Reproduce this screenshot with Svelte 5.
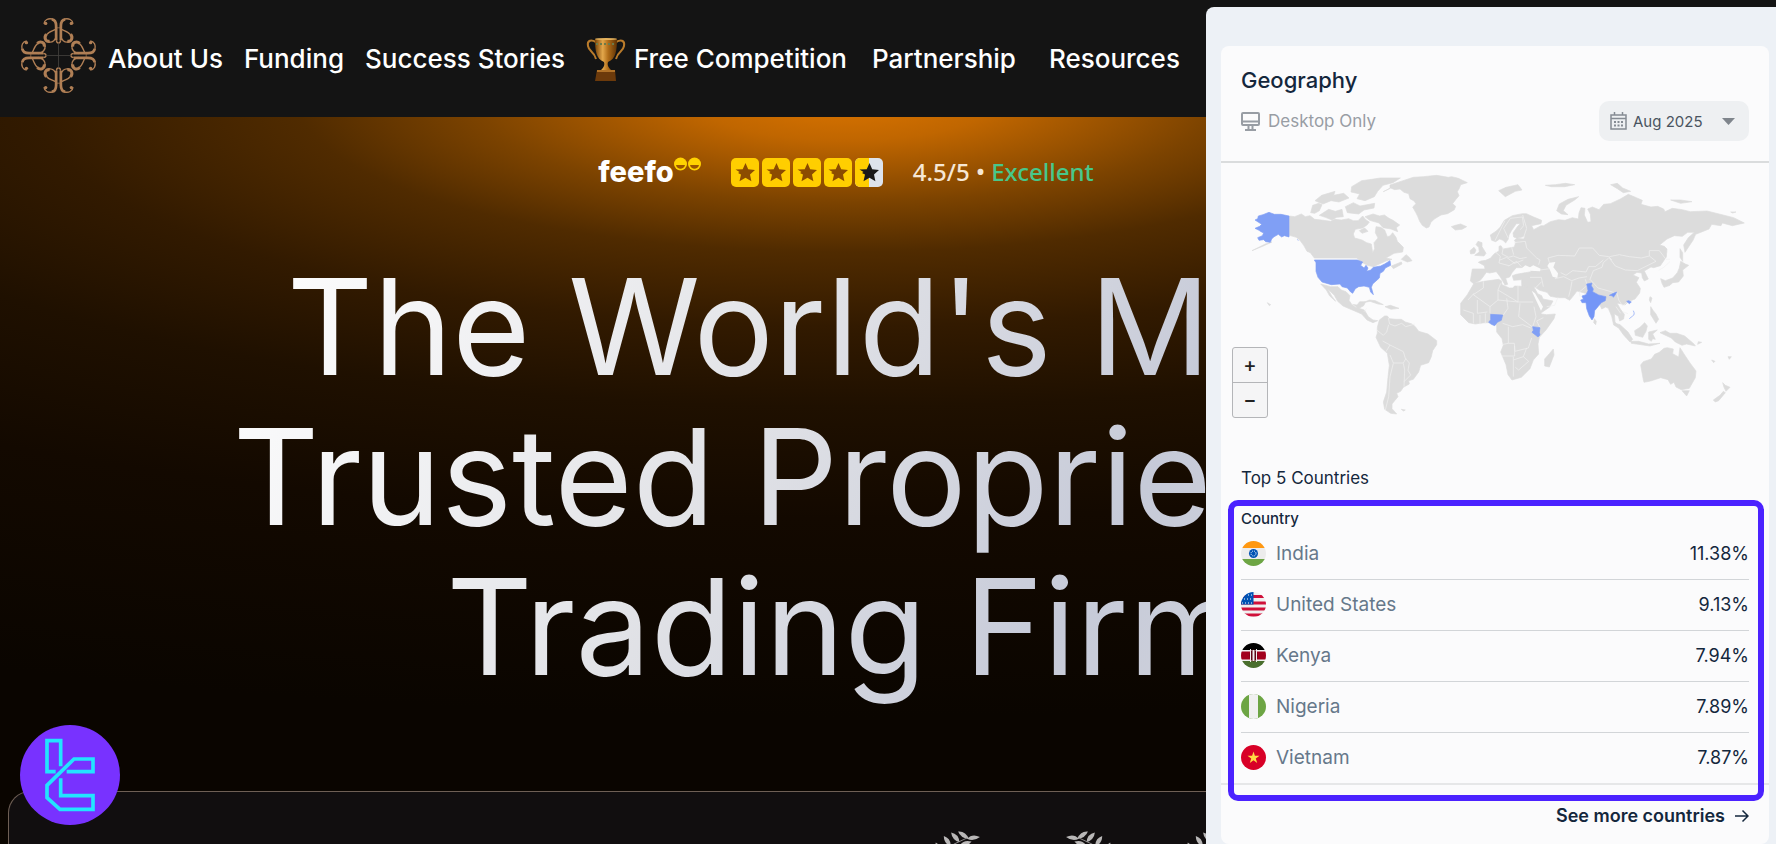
<script>
  let month = $state('Aug 2025');
  let zoom = $state(1);

  const countries = [
    { name: 'India', share: '11.38%' },
    { name: 'United States', share: '9.13%' },
    { name: 'Kenya', share: '7.94%' },
    { name: 'Nigeria', share: '7.89%' },
    { name: 'Vietnam', share: '7.87%' }
  ];

  const stars = [1, 1, 1, 1, 0.5];
  const starPath = 'M14.500 5l2.700 6.300 6.800.7-5 4.500 1.400 6.800-5.900-3.600-6 3.600 1.500-6.800-3-1.500 1.500-1-4-2.400 7.200-.3z';

  // leaves of one laurel branch: x, y, angle
  const leaves = [
    [50, 8, -8], [40, 5, 35], [42, 14, -20], [32, 7, 50], [34, 17, -10],
    [24, 11, 58], [26, 22, -5], [15, 18, 68], [19, 29, 5], [7, 27, 78], [12, 38, 15], [1, 38, 88]
  ];
</script>

<div class="page">
  <header>
    <a class="logo" href="#home" aria-label="Home">
      <svg viewBox="30 23 228 228" fill="none" stroke="#b07f55">
        {#each [0, 90, 180, 270] as angle}
          <g transform="rotate({angle} 144 137)">
            {#each [1, -1] as side}
              <g transform="translate(144 0) scale({side} 1)">
                <path stroke-width="8" d="M-7 92V50C-7 40-10 31-20 30" />
                <path stroke-width="4" d="M-18 29c-12-3-24 2-25 14" />
                <circle cx="-38" cy="42" r="5" fill="#b07f55" stroke="none" />
                <path stroke-width="4" d="M-6 58C-16 64-30 66-36 76" />
                <path stroke-width="9" d="M-36 74c-8 10-2 23 10 21" />
                <path stroke-width="4" d="M-28 97c10 2 20-6 22-20M-6 92c0 6 4 8 6 8" />
              </g>
            {/each}
            <path stroke-width="2" d="M136 55h16" />
            <path stroke-width="2" stroke="#4f4c47" d="M144 100v37" />
          </g>
        {/each}
      </svg>
    </a>
    <nav>
      <a href="#about">About Us</a>
      <a href="#funding">Funding</a>
      <a href="#stories">Success Stories</a>
      <a class="competition" href="#competition">
        <svg viewBox="0 0 40 44" width="40" height="44" aria-hidden="true">
          <defs>
            <linearGradient id="gold">
              <stop offset="0" stop-color="#7a4307" />
              <stop offset=".35" stop-color="#e3a74b" />
              <stop offset=".6" stop-color="#b06c18" />
              <stop offset="1" stop-color="#5f3205" />
            </linearGradient>
          </defs>
          <path d="M10 5C4 2 1 4 2 9c1 6 6 5 8 13M30 5c6-3 9-1 8 4-1 6-6 5-8 13" fill="none" stroke="#b97b2b" stroke-width="2" />
          <path d="M9 2h22c0 11-1 20-9 23-1 3 0 5 3 8H15c3-3 4-5 3-8C10 22 9 13 9 2z" fill="url(#gold)" />
          <path d="M11 33h18l1 11H9z" fill="#6c3a0b" />
          <path d="M11 33h18v2H11z" fill="#b07228" />
          <path d="M10 7h20" stroke="#6d7b4a" stroke-width="2" stroke-dasharray="2 2" />
          <ellipse cx="20" cy="2" rx="11" ry="1" fill="#e4b25d" />
        </svg>
        Free Competition
      </a>
      <a href="#partnership">Partnership</a>
      <a class="resources" href="#resources">Resources</a>
    </nav>
  </header>

  <main>
    <div class="rating">
      <a class="feefo" href="#feefo">
        feefo
        <svg viewBox="0 0 27 14" width="27" height="14" aria-hidden="true">
          <circle cx="6.500" cy="7" r="6.500" fill="#ffd200" />
          <circle cx="20.500" cy="7" r="6.500" fill="#ffd200" />
          <path d="M2 8h9c-1 5-8 5-9 0zM16 8h9c-1 5-8 5-9 0z" fill="#9b5400" />
        </svg>
      </a>
      <div class="stars" role="img" aria-label="4.5 out of 5 stars">
        {#each stars as fill}
          <svg viewBox="0 0 28 29" width="28" height="29">
            <rect width="28" height="29" rx="5" fill={fill < 1 ? '#dde3ec' : '#ffce00'} />
            {#if fill < 1}
              <path d="M14 0H5a5 5 0 0 0-5 5v19a5 5 0 0 0 5 5h9z" fill="#ffce00" />
            {/if}
            <path d={starPath} fill={fill < 1 ? '#191919' : '#8c4c00'} />
          </svg>
        {/each}
      </div>
      <p>4.5/5 • <span>Excellent</span></p>
    </div>

    <h1>The World's Most<br />Trusted Proprietary<br />Trading Firm</h1>

    <section class="awards" aria-label="Awards">
      {#each [0, 1] as wreath}
        <svg viewBox="0 0 184 60" width="184" height="60">
          {#each [0, 1] as side}
            <g transform={side ? 'translate(184 0) scale(-1 1)' : ''} fill="#b9b7b7">
              {#each leaves as [x, y, angle]}
                <path transform="translate({x - 8} {y}) rotate({angle})" d="M-6 0Q0-5 7 0Q0 4-6 0z" />
              {/each}
              <path d="M-6 46Q8 18 36 8" fill="none" stroke="#8b8888" />
            </g>
          {/each}
        </svg>
      {/each}
    </section>
  </main>

  <div class="badge">
    <svg viewBox="60 102 300 300" fill="none" stroke="#22e4ff" stroke-width="11">
      <path d="M167 242H141V149H182V226" />
      <path d="M200 242H279V204H222L141 283V320L180 355H279V314H182V262" />
    </svg>
  </div>

  <aside>
    <div class="card">
      <div class="card-head">
        <h2>Geography</h2>
        <div class="filters">
          <span class="device">
            <svg viewBox="0 0 19 19" width="19" height="19" fill="none" stroke="#989da4" stroke-width="2">
              <rect x="1" y="1" width="17" height="12" rx="1" />
              <path d="M1 9.500h17M7.500 13v4M11.500 13v4M4 18h11" />
            </svg>
            Desktop Only
          </span>
          <label class="month">
            <svg class="calendar" viewBox="0 0 17 18" width="17" height="18" fill="none" stroke="#858b93" stroke-width="1.500">
              <path d="M1 3h15v14H1zM1 6.500h15M4.500 0v3M12.500 0v3" />
              <path d="M4 10h9M4 13.500h9" stroke-width="2" stroke-dasharray="2 1.500" />
            </svg>
            <select bind:value={month} aria-label="Month">
              <option>Aug 2025</option>
              <option>Jul 2025</option>
            </select>
            <svg class="caret" viewBox="0 0 13 7" width="13" height="7"><path d="M0 0h13L6.500 7z" fill="#7f858c" /></svg>
          </label>
        </div>
      </div>

      <div class="map">
        <svg class="world" viewBox="3 9 1644 800" role="img" aria-label="Traffic by country">
          <g fill="#dcdcdc" stroke="#dcdcdc" stroke-width="2" stroke-linejoin="round">
            <!-- Americas -->
            <path d="M490 95l20-10 0-10 30-10 40-13 30-2 40-4 35 6 10-2 20 5 27 13-20 6-4 11-6 10 5 12-10 12-9 12 9 8-4 10-20 12-20 4-20 12-10 10-6 14-8 3-12-8-8-12-6-15-6-12-9-16 10-10-6-8-12-7-4-15-14-4-12-10-16 2-12-5z" />
            <path d="M208 168l16 2 20-8 12 8 14-3 14 11 20 2 28 4 12-6 20 2 22-4 14 6 14 0 14-14 10 12 10 6-6 8-14 10-22 4-6 14 4 12 22 6 14 8 14 4 4 26 6-12-2-18 12-14-8-16 2-18 14 2 12 8 8 20 8-2 8-10 10 14 4 12 18 18-2 14-26 4-24 14 18 4-16 4-22 10-18 8-18-4-14-8-18-14H283l-12-16-10-4-10-18-12-16-10-8-21-6z" />
            <path d="M435 170l24-8 20 6 14-3 14 10 12 6 20 14-10 8 4 12-20-8-24-4-12-14-28-8zM298 166l28-18 20 6 20-6 4 22-20 2-14 8-20-8zM272 158l6-22 18-6 10 4-8 18-14 8zM395 80l30-18 30-4 26-4 60 0-22 14-30 8-16 18-10 16-28 12-24-6 8-14-26-6zM285 122l20-16 40-12-4 12 30-6 16 14-30 12-24-4-24 10zM376 140l24-12 20 10 44-8-2 14-30 6-16 12-34-4zM544 298l14-14 8 6 10 12-14 4zM514 318l30-12 2 6-26 14zM418 212l16-8 10 10-18 6z" />
            <path d="M302 372l30 8 22 0 10 10 14 5 12 12-3 14 8 12 16 2 8-10 18 0-6 12-14 8 16 5 12 20 14 10 14 2-14 6-18-8-16-18-28-12-28-12-16-14-10-18-20-20 12 22 12 16-18-16-10-18zM430 428l18-8 18 2 24 12-16-2-24-8zM495 440l16-4 26 9-24 3zM96 272l40-20 20-6-26 12z" />
            <path d="M478 480l16-12 8 0 6 8 20 2 16 0 12 8 20 6 10 8 10 14 28 8 26 20 0 12-12 18-4 18-8 18-24 8-6 20-16 22-14 4 2 10-18 10-8 12-12 6 4 10-10 12-8 10 0 14 14 16-18-2-18-12-4-22 10-30 4-44 4-36-6-36-20-18-14-30 4-12 0-18z" />
            <path d="M694 200l12-4 16-4 18 8-14 8-20 2zM544 748l12 2-6 3zM142 428l10 6-4 3z" />
            <!-- Europe, Africa, Asia and Oceania -->
            <g transform="translate(660 0)">
              <path d="M97 327l38 0-2-10-18-10 8-4 14-2 14-6 12-14 14-8 0-14 6-2 6 10 22-4 12-2 4-14-4-6 8-6 20 2 4-8-24 6-10-4-2-12 14-20 8-8-12 0-14 20-8 14-2 12-8 12-8-8-10-4-12 8-12-4-4-16 18-12 12-12 12-20 24-14 30-6 12 0 22 10 24 10-2 10-28 6 6 12 22-12 8 0 20-12 24-6 20 2 22-8 18 4 2-18 6-16 12 2-2 20 10 22 10-2-2-22-8-16 14-6 20 8 14-16 20-2 30-14 24-14 24 10 18 8-4 12 30 8 20-2 18 8 4 8 22-10 30 4 24 6 50-2 48 12 32 8 32 16-36 8-30-8-4 8-28-4-8 14-20 8-20 8-8 18-24 36-4-22 14-22 18-16-20 0-16 12-24-2-22 10-22 18 14 4 8 8-2 24-18 26-20 6-8-2-20 12 12 24-12 6-6-10-2-14-14-2-12 8 18 8-8 14 12 18-2 14-14 18-20 8-10 10-14-4-10-2 10 18 12 16-2 14-12 6-4-14-12-8 2 24 10 18-14-8-6-26-10-24-8-4-12 6-10-24-34-22-30-8-12 16-10 12-14-8-20 0-24-4-10-12-22-6-18-12 12 22 12 6 4 10 30 6-10 18-26 18-20 6-12-20-12-24-12-30-2-20 0-12-24 2-4-14 12-4 44-8-4-12-40 0-12 14-8 14-12 4 6 18-8 2-14-24-12-16-20 4-10-2-10 14-8 10-20 10-10-8z" />
              <path d="M102 370l30-6 44-6 8 4 2 12 22 10 10 0 6-6 40 2 8 4 10 24 8 26 14 28 16 2 26-2-4 14-24 34-20 22-4 20 2 30-16 18-10 26-26 26-28 8-12-16-6-30-10-24-6-14 8-20-4-20-16-20 0-20-20-8-16 0-28 4-20-4-24-24 0-34 20-26z" />
              <path d="M314 597l14-16 12-14 2 18-14 36-14-3zM104 286l14-10-2-14-8-8 6-10 12 4 0 12 12 20-6 8zM90 272l12-10 6 8-4 10-12 2zM176 92l22-10 36-8 12 16-20 4-30 16zM316 76l30-2 30-4 28 4-30 6-40 0zM350 152l8-20 26-14 32-8-12 10-26 16-8 16 14 12-20-2zM512 74l20-4 16 14 24 10-22 4-18-12zM692 120l30 0 34 5-34 5zM872 156l16 0-10 3zM720 266l8 12 0 26-8-12zM722 304l14 8 10 4-18 14 2 18-14 18-18 2-8 8-18 6-6-12-4-14 14 6 22-8 14-16 6-14zM630 410l6 4-4 14-4-8zM632 440l8 12 8 10 8 16-8 12-6-10-10-16zM463 476l6 8-2 10-6-6z" />
              <path d="M526 490l14 4 24 22 14 22-8 8-20-22zM572 544l24 0 30 8 34-2-30 8-56-8zM584 512l16-10 14-14 8 10-4 16-10 18-22-6zM626 516l26-6-14 12 8 16-8-2-4 8-8-6zM660 518l16-6 14 8 20 0 24 8 28 24 4 6-26-6-14 4-20-10-12-12zM775 545l10 2-12 6zM815 600l10 4-4 4zM864 590l10 0-6 8z" />
              <path d="M602 615l8-10 24-8 10-14 14-6 14-12 10-2 18 4-2 14 18 10 4-28 14 22 16 24 18 24-2 20-18 32-24 4-16-8-6-14-10 6-8-14-22-6-30 10-20 4-2-8zM726 692l22 0-8 16zM848 668l8 8 14 6-12 12-6-12zM850 694l6 4-20 24-10 4-6-6 20-14z" />
            </g>
          </g>
          <!-- inland seas -->
          <g transform="translate(660 0)" fill="#fafafa">
            <path d="M242 328l14-12 14 6 10-6 22 10-2 8-30-2-20 4zM328 308l18-2-6 16 14 18-2 14-14-4-8-20-8-12zM275 392l10 8 24 40-6 12-14-30z" />
          </g>
          <!-- borders -->
          <g fill="none" stroke="#f2f2f2" stroke-width="2" stroke-linejoin="round">
            <path d="M505 474l4 18 16 6 20-8 12 10 28-8M470 510l20 16 10-10 6-22M498 575l12-20-22-12M510 555l40 20 6 20 12 14-4 22 8 14-20 20M510 585l10 24 30 0 8-14M520 610l-10 40-4 60-10 40M550 610l4 20-2 50M395 432l14 10M432 455l8-10" />
            <g transform="translate(660 0)">
              <path d="M130 364l0 20-30 20 50 36 24-20 0-30 8-20M102 400l-18 20M174 420l60 6 0-48M234 426l46 0M174 390l60 36M150 440l0 20M112 420l0 40 30-4M190 465l14-20-4-30M240 430l-4 40 40 30M70 450l30 10 0 30M120 465l0 28M136 460l0 32M278 500l10-30-6-30M188 490l30 10 30-6 24 10M205 500l0 50-20 4M205 550l18 0 2 24 40-10 10-30M184 588l40 0 0-30M220 590l0 60M220 600l30-10 16 14-30 26-10-8M250 590l10-26M300 503l-10-20 20-10M190 262l-4 20 20 10 14-4 20 8 20-4M165 275l16 14-4 20 30 8M215 262l6 22M180 300l20-8 24 18 26-10M206 318l24-14 14 16M165 242l30-60M205 235l-14-30 20-30 36-4 4 26-10 12M250 235l10-30-12-40M222 248l34-4 4 20 30 30 10 6-4 14" />
              <path d="M300 330l30-4M328 308l-4-14 30-8 50 2 14-24 40 0 20 22 28 4 10 10M490 300l-24 20-20 0-8 16-40-4-20 14-16-8M508 290l30-6 30 6 36 4 24-6 20 16-40 20-16 8-36-2-30-12-18-24M628 288l0-16 30 0 20 26 12 0M690 305l-20 18-14 8M506 294l-16 14-4 14-26 10-10 26 24 26 50 14M345 356l26-6 24 12 22-8 24-4M396 364l-4 22-6 24M420 410l-2-14 24-20-6-18M270 352l34 0 6 28M285 385l20-20M320 440l24-4 10-24M530 396l6 24 12 18 14-12M528 440l14 20M548 455l16 6" />
            </g>
          </g>
          <!-- top countries -->
          <g fill="#809ff5" stroke="#809ff5" stroke-width="2" stroke-linejoin="round">
            <path d="M105 180l8-4 2-8 14-4 18-7 16 6 20 0 24 5 0 63-14-4-8 4-10-8-14 8-6 6-4 10-14-2-6-6-14 2-4-8 14-6 4-8-8-4-6-4-12-6 14-6 6-6z" />
            <path d="M232 238l3 4M283 300H412l16 6-6 10 10 8 6-8 6 8-4 10 12-4 8-8 22-4 12-6 16-10 2 14-16 8-6 10-10 6-2 14-20 18-4 10 6 22-8-8-4-14-16-4-16 2-10 6-8 14-6-4-10-12-16-4-6-8-26 2-28-8-12-14-6-18 0-26z" />
            <g transform="translate(660 0)">
              <path d="M440 372l16-3-2 8 6 10-2 8 18 10 22 5-2 12-12 6-10 12-10 12-2 18-6 10-8-12-8-22-2-18-12 0-4-8 8-2-4-10 12-4 6-12zM508 406l12-6 10-4-4 8-6 8-2-4z" fill="#7496f7" />
              <path d="M152 463l36 2-4 16-12 6-8 10-10-4-8-6 6-8zM278 500l22 3-2 14 2 8-6 6-18-14 4-6zM560 424l6-2 8 4-6 5z" />
              <path d="M580 452q6 12-2 16l-10 8" fill="none" />
            </g>
          </g>
        </svg>
        <div class="zoom">
          <button aria-label="Zoom in" onclick={() => zoom++}>+</button>
          <button aria-label="Zoom out" onclick={() => zoom--}>−</button>
        </div>
      </div>

      <h3>Top 5 Countries</h3>
      <div class="list">
        <table>
          <thead>
            <tr><th colspan="2" scope="col">Country</th></tr>
          </thead>
          <tbody>
            {#each countries as { name, share }}
              <tr>
                <td>
                  <div class="country">
                    <svg class="flag" viewBox="0 0 25 25" width="25" height="25" aria-hidden="true">
                      {#if name === 'India'}
                        <path fill="#ececec" d="M0 0h25v25H0z" />
                        <path fill="#ff9811" d="M0 0h25v7H0z" />
                        <path fill="#6da544" d="M0 18h25v7H0z" />
                        <circle cx="12.500" cy="12.500" r="4.500" fill="#0052b4" />
                        <circle cx="12.500" cy="12.500" r="2.500" fill="none" stroke="#fff" stroke-dasharray="1 1" />
                      {:else if name === 'United States'}
                        <path fill="#f0f0f0" d="M0 0h25v25H0z" />
                        <path stroke="#d0103a" stroke-width="3" d="M0 4.500h25M0 11h25M0 17h25M0 23h25" />
                        <path fill="#0052b4" d="M0 0h12.500v12.500H0z" />
                        <path stroke="#fff" stroke-width="1" stroke-dasharray="1 2" d="M7 3h6M3 7h9M1 11h11" />
                      {:else if name === 'Kenya'}
                        <path fill="#f0f0f0" d="M0 0h25v25H0z" />
                        <path d="M0 0h25v7H0z" />
                        <path fill="#a2001d" d="M0 8.500h25v8H0z" />
                        <path fill="#496e2d" d="M0 18h25v7H0z" />
                        <ellipse cx="12.500" cy="12.500" rx="4" ry="6" fill="#5d0714" />
                        <path stroke="#f0f0f0" d="M9.500 6v13M15.500 6v13" />
                        <path stroke="#f0f0f0" stroke-width="2" d="M12.500 7v11" />
                      {:else if name === 'Nigeria'}
                        <path fill="#6da544" d="M0 0h25v25H0z" />
                        <path fill="#f0f0f0" d="M8 0h9v25H8z" />
                      {:else}
                        <path fill="#d80027" d="M0 0h25v25H0z" />
                        <path fill="#ffda44" d="M12.500 6.500l1.400 4.300h4.600l-3.700 2.700 1.400 4.400-3.700-2.700-3.700 2.700 1.400-4.400-3.700-2.700h4.600z" />
                      {/if}
                    </svg>
                    {name}
                  </div>
                </td>
                <td class="share">{share}</td>
              </tr>
            {/each}
          </tbody>
        </table>
        <div class="highlight"></div>
      </div>

      <a class="more" href="#countries">
        See more countries
        <svg viewBox="0 0 14 14" width="14" height="14" fill="none" stroke="#14273c" stroke-width="1.500"><path d="M0 7h13M7.500 1.500L13 7l-5.500 5.500" /></svg>
      </a>
    </div>
  </aside>
</div>

<style>
  :global(body) { margin: 0; background: #141414; }
  .page { position: relative; display: flex; flex-direction: column; min-height: 100vh; overflow: hidden; font-family: Inter, "Open Sans", sans-serif; }
  a { color: inherit; text-decoration: none; }
  h1, h2, h3, p { margin: 0; font-weight: 400; }
  svg { display: block; flex: none; }

  header { display: flex; align-items: center; gap: 11px; height: 117px; padding-left: 20px; box-sizing: border-box; background: #141414; color: #fff; }
  .logo svg { width: 77px; height: 77px; margin-bottom: 6px; }
  nav { display: flex; align-items: center; gap: 21px; font-size: 26px; font-weight: 500; line-height: 32px; white-space: nowrap; }
  .competition { display: flex; align-items: center; gap: 8px; margin-right: 4px; }
  .resources { margin-left: 12px; }

  main { display: flex; flex-direction: column; flex: 1; padding: 40px 92px 0 8px; background: radial-gradient(ellipse 2200px 620px at 846px -20px, #dc7500 0%, #c06600 7%, #7c4300 17%, #502b00 25%, #321a00 37%, #1f1000 50%, #130900 68%, #0a0500 100%); }
  .rating { display: flex; align-items: center; justify-content: center; gap: 30px; height: 30px; }
  .feefo { display: flex; align-items: flex-start; color: #fff; font-size: 29px; font-weight: 800; line-height: 30px; }
  .stars { display: flex; gap: 3px; }
  .rating p { color: #f6e7d4; font-family: "Noto Sans", sans-serif; font-size: 24px; font-weight: 500; line-height: 30px; white-space: nowrap; }
  .rating span { color: #48c78a; }
  h1 { align-self: center; margin-top: 64px; padding-bottom: 16px; font-size: 134px; line-height: 150px; text-align: center; white-space: nowrap; color: transparent; background: linear-gradient(120deg, #fff 0%, #e2e3e7 40%, #c6cad8 70%, #d9dbe0 100%); background-clip: text; }
  .awards { display: flex; flex: 1 0 54px; gap: 68px; min-height: 0; margin-top: 74px; padding: 38px 0 0 55%; box-sizing: border-box; overflow: hidden; border: 1px solid #6e5f55; border-bottom: 0; border-radius: 22px 22px 0 0; background: #110e0f; }

  .badge { position: absolute; left: 20px; bottom: 20px; width: 100px; height: 100px; border-radius: 50%; background: #7832ff; }

  aside { position: absolute; top: 7px; right: 0; bottom: 0; width: 570px; padding: 39px 7px 0 15px; box-sizing: border-box; border-radius: 8px 0 0 0; background: #edf1f6; color: #14273c; }
  .card { border-radius: 8px; background: #fbfbfc; }
  .card-head { padding: 20px; border-bottom: 2px solid #dadcdd; }
  h2 { font-size: 22px; font-weight: 500; line-height: 28px; }
  .filters { display: flex; align-items: center; justify-content: space-between; margin-top: 7px; }
  .device { display: flex; align-items: center; gap: 8px; color: #989da4; font-size: 17px; line-height: 20px; }
  .month { position: relative; display: flex; align-items: center; }
  .month select { width: 150px; height: 40px; padding: 0 34px; border: 0; border-radius: 10px; appearance: none; background: #eef0f2; color: #4a5460; font: 15px Inter, sans-serif; }
  .calendar { position: absolute; left: 11px; }
  .caret { position: absolute; right: 14px; pointer-events: none; }

  .map { position: relative; }
  .world { width: 100%; height: auto; }
  .zoom { position: absolute; left: 11px; top: 184px; display: flex; flex-direction: column; width: 36px; box-sizing: border-box; border: 1px solid #b4b5b8; border-radius: 3px; background: #f5f5f6; }
  .zoom button { height: 34px; padding: 0; border: 0; background: none; color: #222; font: 500 20px Inter, sans-serif; }
  .zoom button + button { height: 35px; border-top: 1px solid #b4b5b8; }

  h3 { margin: 38px 0 0 20px; font-size: 17px; line-height: 20px; }
  .list { position: relative; margin-top: 20px; padding: 0 20px; border-bottom: 2px solid #e6e7e8; }
  table { width: 100%; border-collapse: collapse; }
  th { padding: 0; font-size: 15px; font-weight: 500; line-height: 21px; text-align: left; }
  td { height: 50px; padding: 0; border-bottom: 1px solid #d2d5d8; color: #66788a; font-size: 19px; }
  tbody tr:last-child td { border-bottom: 0; }
  .country { display: flex; align-items: center; gap: 10px; }
  .flag { border-radius: 50%; }
  .share { color: #14273c; font-size: 18px; text-align: right; }
  .highlight { position: absolute; inset: -8px 5px -18px 7px; border: 6px solid #4b22ff; border-radius: 10px; pointer-events: none; }
  .more { display: flex; align-items: center; justify-content: flex-end; gap: 10px; padding: 20px 20px 17px; font-size: 18px; font-weight: 600; line-height: 22px; }
</style>
